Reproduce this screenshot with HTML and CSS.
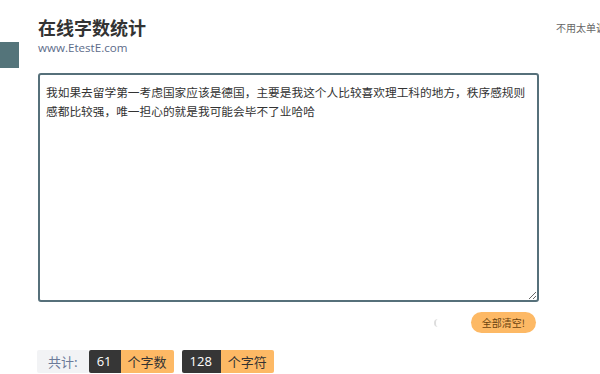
FILE: index.html
```html
<!DOCTYPE html>
<html>
<head>
  <meta charset="utf-8">
  <title>在线字数统计</title>
  <link rel="stylesheet" href="styles.css">
</head>
<body>
  <div class="side-tab"></div>
  <div class="top-note">不用太单调</div>

  <div class="main">
    <div class="header">
      <h1 class="title">在线字数统计</h1>
      <div class="site">www.EtestE.com</div>
    </div>

    <textarea class="input-box" id="text-input">我如果去留学第一考虑国家应该是德国，主要是我这个人比较喜欢理工科的地方，秩序感规则感都比较强，唯一担心的就是我可能会毕不了业哈哈</textarea>

    <div class="actions">
      <span class="loader"></span>
      <button class="clear-btn">全部清空!</button>
    </div>

    <div class="stats">
      <span class="stat-label">共计:</span>
      <span class="stat-group">
        <span class="stat-num">61</span><span class="stat-unit">个字数</span>
      </span>
      <span class="stat-group">
        <span class="stat-num">128</span><span class="stat-unit">个字符</span>
      </span>
    </div>
  </div>
</body>
</html>
```

FILE: styles.css
```css
html, body {
  margin: 0;
  padding: 0;
  background: #fff;
  overflow: hidden;
}

body {
  font-family: "Open Sans", "Noto Sans CJK SC", sans-serif;
  color: #333;
}

.side-tab {
  position: fixed;
  left: 0;
  top: 42px;
  width: 19px;
  height: 26px;
  background-color: #54747a;
}

.top-note {
  position: absolute;
  left: 556px;
  top: 20px;
  font-family: "Noto Sans CJK SC", sans-serif;
  font-size: 10px;
  color: #666;
  white-space: nowrap;
}

.main {
  width: 500px;
  padding: 15px 0 0 38px;
}

.title {
  margin: 0;
  font-family: "Noto Sans CJK SC", sans-serif;
  font-size: 18px;
  line-height: 24px;
  font-weight: bold;
  color: #333;
}

.site {
  font-size: 11.6px;
  line-height: 18px;
  color: #5c6b8a;
}

.input-box {
  display: block;
  box-sizing: border-box;
  width: 501px;
  height: 229px;
  margin-top: 16px;
  padding: 7px 5px 7px 6px;
  border: 2px solid #56707a;
  border-radius: 3px;
  font-family: "Noto Sans CJK SC", sans-serif;
  font-size: 11.7px;
  line-height: 19px;
  color: #333;
  resize: vertical;
  outline: none;
}

.actions {
  display: flex;
  justify-content: flex-end;
  align-items: center;
  gap: 29px;
  margin-top: 10px;
  padding-right: 2px;
}

.loader {
  width: 8px;
  height: 8px;
  border-radius: 50%;
  border-left: 2px solid #ddd;
  box-sizing: border-box;
}

.clear-btn {
  height: 21px;
  padding: 0 11px;
  border: none;
  border-radius: 11px;
  background-color: #fdb965;
  font-family: "Noto Sans CJK SC", sans-serif;
  font-size: 10px;
  color: #6b4410;
  cursor: pointer;
}

.stats {
  display: flex;
  gap: 8px;
  margin-top: 17px;
  font-size: 13px;
  line-height: 23px;
}

.stat-label {
  padding: 0 11px;
  background-color: #f2f3f5;
  color: #6b7a99;
  border-radius: 2px;
  margin-right: -8px;
  margin-left: -1px;
  font-family: "Noto Sans CJK SC", sans-serif;
}

.stat-group {
  display: flex;
  border-radius: 2px;
  overflow: hidden;
}

.stat-num {
  padding: 0 9px 0 8px;
  background-color: #363636;
  color: #fff;
}

.stat-unit {
  padding: 0 7px;
  background-color: #fdb965;
  color: #333;
  font-family: "Noto Sans CJK SC", sans-serif;
}
```
